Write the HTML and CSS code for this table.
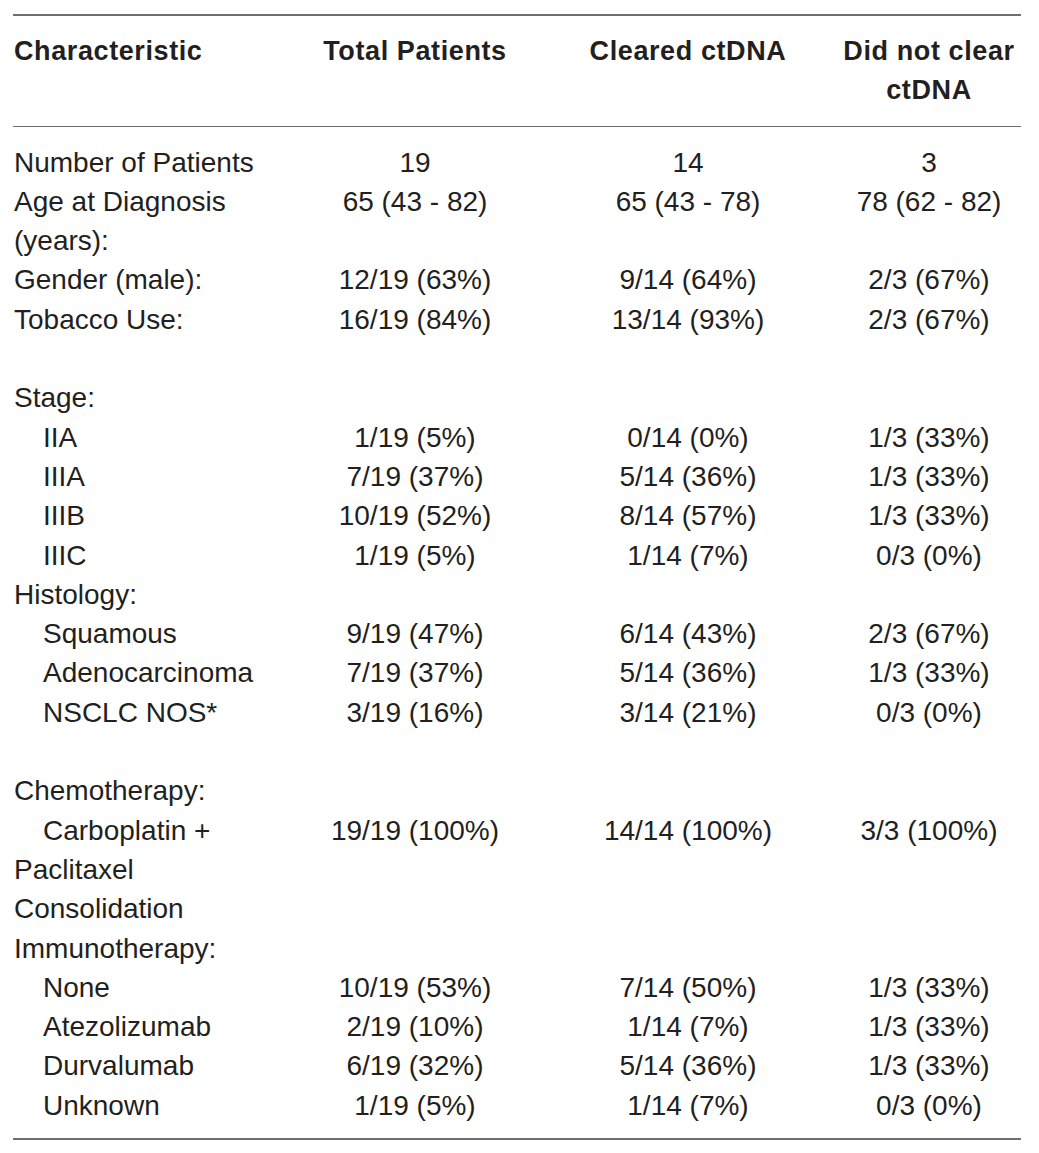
FILE: index.html
```html
<!DOCTYPE html>
<html>
<head>
<meta charset="utf-8">
<link rel="stylesheet" href="styles.css">
</head>
<body>
<div class="wrap">
<table class="tbl">
<colgroup>
<col class="c1"><col class="c2"><col class="c3"><col class="c4">
</colgroup>
<thead>
<tr>
<th class="lbl">Characteristic</th>
<th>Total Patients</th>
<th>Cleared ctDNA</th>
<th>Did not clear ctDNA</th>
</tr>
</thead>
<tbody>
<tr class="first"><td class="lbl">Number of Patients</td><td>19</td><td>14</td><td>3</td></tr>
<tr><td class="lbl">Age at Diagnosis (years):</td><td>65 (43 - 82)</td><td>65 (43 - 78)</td><td>78 (62 - 82)</td></tr>
<tr><td class="lbl">Gender (male):</td><td>12/19 (63%)</td><td>9/14 (64%)</td><td>2/3 (67%)</td></tr>
<tr><td class="lbl">Tobacco Use:</td><td>16/19 (84%)</td><td>13/14 (93%)</td><td>2/3 (67%)</td></tr>
<tr><td class="lbl">&nbsp;</td><td></td><td></td><td></td></tr>
<tr><td class="lbl">Stage:</td><td></td><td></td><td></td></tr>
<tr><td class="lbl ind">IIA</td><td>1/19 (5%)</td><td>0/14 (0%)</td><td>1/3 (33%)</td></tr>
<tr><td class="lbl ind">IIIA</td><td>7/19 (37%)</td><td>5/14 (36%)</td><td>1/3 (33%)</td></tr>
<tr><td class="lbl ind">IIIB</td><td>10/19 (52%)</td><td>8/14 (57%)</td><td>1/3 (33%)</td></tr>
<tr><td class="lbl ind">IIIC</td><td>1/19 (5%)</td><td>1/14 (7%)</td><td>0/3 (0%)</td></tr>
<tr><td class="lbl">Histology:</td><td></td><td></td><td></td></tr>
<tr><td class="lbl ind">Squamous</td><td>9/19 (47%)</td><td>6/14 (43%)</td><td>2/3 (67%)</td></tr>
<tr><td class="lbl ind">Adenocarcinoma</td><td>7/19 (37%)</td><td>5/14 (36%)</td><td>1/3 (33%)</td></tr>
<tr><td class="lbl ind">NSCLC NOS*</td><td>3/19 (16%)</td><td>3/14 (21%)</td><td>0/3 (0%)</td></tr>
<tr><td class="lbl">&nbsp;</td><td></td><td></td><td></td></tr>
<tr><td class="lbl">Chemotherapy:</td><td></td><td></td><td></td></tr>
<tr><td class="lbl ind">Carboplatin + Paclitaxel</td><td>19/19 (100%)</td><td>14/14 (100%)</td><td>3/3 (100%)</td></tr>
<tr><td class="lbl">Consolidation Immunotherapy:</td><td></td><td></td><td></td></tr>
<tr><td class="lbl ind">None</td><td>10/19 (53%)</td><td>7/14 (50%)</td><td>1/3 (33%)</td></tr>
<tr><td class="lbl ind">Atezolizumab</td><td>2/19 (10%)</td><td>1/14 (7%)</td><td>1/3 (33%)</td></tr>
<tr><td class="lbl ind">Durvalumab</td><td>6/19 (32%)</td><td>5/14 (36%)</td><td>1/3 (33%)</td></tr>
<tr class="last"><td class="lbl ind">Unknown</td><td>1/19 (5%)</td><td>1/14 (7%)</td><td>0/3 (0%)</td></tr>
</tbody>
</table>
</div>
</body>
</html>
```
FILE: styles.css
```css
html, body {
  margin: 0;
  padding: 0;
  background: #ffffff;
}
.wrap {
  padding: 14px 0 0 13px;
}
.tbl {
  width: 1008px;
  table-layout: fixed;
  border-collapse: separate;
  border-spacing: 0;
  font-family: "Liberation Sans", Arial, sans-serif;
  color: #231f20;
}
.c1 { width: 278px; }
.c2 { width: 248px; }
.c3 { width: 298px; }
.c4 { width: 184px; }
.tbl th {
  font-size: 27px;
  font-weight: bold;
  letter-spacing: 0.6px;
  line-height: 39.3px;
  text-align: center;
  vertical-align: top;
  padding: 16px 0 15px 0;
  border-top: 2px solid #6d6e71;
  border-bottom: 1px solid #6d6e71;
}
.tbl th.lbl {
  text-align: left;
  padding-left: 1px;
}
.tbl td {
  font-size: 28px;
  line-height: 39.3px;
  text-align: center;
  vertical-align: top;
  padding: 0;
  white-space: nowrap;
}
.tbl td.lbl {
  text-align: left;
  padding-left: 1px;
  white-space: normal;
}
.tbl td.ind {
  text-indent: 29px;
}
.tbl tr.first td {
  padding-top: 16px;
}
.tbl tr.last td {
  padding-bottom: 13px;
  border-bottom: 2px solid #6d6e71;
}
```
